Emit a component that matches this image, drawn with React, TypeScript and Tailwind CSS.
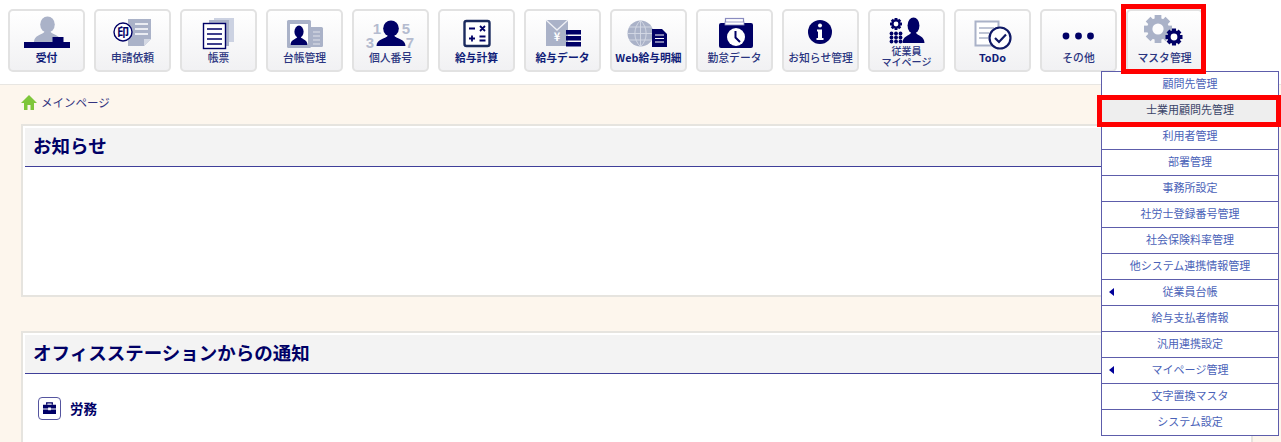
import React from "react";

const NAVY = "#000066";
const GREY = "#aab2c8";

function Gear({ cx, cy, r, fill, hole }: { cx: number; cy: number; r: number; fill: string; hole: string }) {
  const teeth = [0, 45, 90, 135, 180, 225, 270, 315];
  return (
    <g>
      {teeth.map((a) => (
        <rect key={a} x={cx - r * 0.24} y={cy - r} width={r * 0.48} height={r * 0.5} fill={fill} transform={`rotate(${a} ${cx} ${cy})`} />
      ))}
      <circle cx={cx} cy={cy} r={r * 0.78} fill={fill} />
      <circle cx={cx} cy={cy} r={r * 0.4} fill={hole} />
    </g>
  );
}

function Person({ cx, top, w, h, fill }: { cx: number; top: number; w: number; h: number; fill: string }) {
  const b = top + h;
  const hw = w * 0.27;
  return (
    <g fill={fill}>
      <ellipse cx={cx} cy={top + h * 0.3} rx={hw} ry={h * 0.32} />
      <path d={`M${cx - w / 2} ${b} C${cx - w / 2} ${b - h * 0.28} ${cx - w * 0.2} ${b - h * 0.28} ${cx - w * 0.1} ${b - h * 0.42} L${cx + w * 0.1} ${b - h * 0.42} C${cx + w * 0.2} ${b - h * 0.28} ${cx + w / 2} ${b - h * 0.28} ${cx + w / 2} ${b} Z`} />
    </g>
  );
}

const icons: Record<string, React.ReactNode> = {
  reception: (
    <>
      <Person cx={39.5} top={6} w={27} h={25} fill={GREY} />
      <rect x={44.5} y={26} width={11} height={6} fill={NAVY} />
      <rect x={16} y={31} width={46} height={6} fill={NAVY} />
    </>
  ),
  request: (
    <>
      <path d="M34 8H57V28L50 35H34Z" fill={GREY} />
      <path d="M41 13H54M41 18H54M41 23H54" stroke="#fff" strokeWidth={1.6} />
      <path d="M50 35V28H57Z" fill="#d5d9e4" />
      <circle cx={29} cy={21} r={9} fill="#fff" stroke={NAVY} strokeWidth={1.4} />
      <text x={29} y={25.5} textAnchor="middle" fontSize={12} fontWeight={700} fill={NAVY}>印</text>
    </>
  ),
  forms: (
    <>
      <rect x={34} y={7} width={20} height={24} fill="#ccd2e2" />
      <rect x={29} y={9} width={20} height={26} fill={GREY} />
      <rect x={23.5} y={12.5} width={22} height={25} fill="#fff" stroke={NAVY} strokeWidth={1.4} />
      <path d="M27 18H42M27 23H42M27 28H42M27 33H42" stroke={NAVY} strokeWidth={1.7} />
    </>
  ),
  ledger: (
    <>
      <rect x={40} y={16} width={17} height={20} rx={1.5} fill={GREY} />
      <path d="M47 21H54M47 25H54M47 29H54M47 33H54" stroke="#dfe2ea" strokeWidth={1.2} />
      <rect x={21} y={9} width={24} height={28} rx={1.5} fill={GREY} />
      <rect x={24} y={13} width={18} height={21} fill="#fff" />
      <Person cx={33} top={15} w={17} h={19} fill={NAVY} />
    </>
  ),
  mynumber: (
    <>
      <Person cx={39} top={10} w={29} h={25} fill={NAVY} />
      <g fontSize={15} fontWeight={700} fill="#b4bbcf" textAnchor="middle" fontFamily="'Liberation Sans', sans-serif">
        <text x={25} y={23}>1</text>
        <text x={54} y={23}>5</text>
        <text x={18} y={37}>3</text>
        <text x={58} y={37}>7</text>
      </g>
    </>
  ),
  calc: (
    <>
      <rect x={26.5} y={10} width={25} height={25} rx={2} fill="#fff" stroke="#1b2a5e" strokeWidth={2.4} />
      <path d="M31 17.5H37M42 15L47 20M47 15L42 20M31 27.5H37M34 24.5V30.5M41.5 25.5H47.5M41.5 29.5H47.5" stroke={NAVY} strokeWidth={1.8} fill="none" />
    </>
  ),
  paydata: (
    <>
      <rect x={22} y={9} width={22} height={26} fill={GREY} />
      <path d="M22 9L33 19L44 9" fill="none" stroke="#eef0f5" strokeWidth={1.3} />
      <text x={33} y={30} textAnchor="middle" fontSize={11} fontWeight={700} fill="#fff">¥</text>
      <rect x={42} y={19} width={15} height={4.5} fill={NAVY} />
      <rect x={42} y={25} width={15} height={4.5} fill={NAVY} />
      <rect x={42} y={31} width={15} height={4.5} fill={NAVY} />
    </>
  ),
  web: (
    <>
      <circle cx={30.5} cy={22.5} r={13} fill={GREY} />
      <path d="M17.5 22.5H43.5M19 16H42M19 29H42M30.5 9.5V35.5M30.5 9.5C23 16 23 29 30.5 35.5M30.5 9.5C38 16 38 29 30.5 35.5" stroke="#d6dae5" strokeWidth={0.9} fill="none" />
      <path d="M42 18H52L57 23V36H42Z" fill={NAVY} />
      <path d="M45 24H54M45 27.5H54M45 31H54" stroke="#fff" strokeWidth={1} />
    </>
  ),
  attendance: (
    <>
      <rect x={29.5} y={7.5} width={18} height={8} fill="#fff" stroke="#8a8cc0" strokeWidth={1.2} />
      <rect x={23} y={12} width={34} height={25} rx={2} fill={NAVY} />
      <rect x={29} y={11} width={19} height={3} fill="#fff" stroke="#8a8cc0" strokeWidth={0.8} />
      <circle cx={40} cy={26} r={9} fill="#fff" />
      <path d="M39.5 20V26.5L44 31" stroke={NAVY} strokeWidth={2} fill="none" />
    </>
  ),
  notice: (
    <>
      <circle cx={38} cy={21} r={12} fill={NAVY} />
      <circle cx={38} cy={14.5} r={2} fill="#fff" />
      <path d="M35 18.5H40V27H41.5V29H34.5V27H36V20.5H35Z" fill="#fff" />
    </>
  ),
  employee: (
    <>
      <Gear cx={28} cy={13} r={6} fill={NAVY} hole="#fff" />
      <g fill={NAVY}>
        {[23.5, 28, 32.5].map((x) =>
          [22.5, 26.5, 30.5].map((y) => <circle key={`${x}-${y}`} cx={x} cy={y} r={1.9} />)
        )}
      </g>
      <Person cx={45.5} top={7} w={22} h={25} fill={NAVY} />
    </>
  ),
  todo: (
    <>
      <rect x={21.5} y={10.5} width={23} height={24} fill="#fff" stroke={GREY} strokeWidth={2} />
      <path d="M25 17H40M25 22H35M25 27H34" stroke={GREY} strokeWidth={1.6} />
      <circle cx={46} cy={27} r={10.5} fill="#fff" stroke="#101a66" strokeWidth={2.2} />
      <path d="M41 27L45 31L52 23.5" fill="none" stroke="#101a66" strokeWidth={2.2} />
    </>
  ),
  other: (
    <g fill={NAVY}>
      <circle cx={26} cy={25} r={3.4} />
      <circle cx={38.5} cy={25} r={3.4} />
      <circle cx={50.5} cy={25} r={3.4} />
    </g>
  ),
  master: (
    <>
      <Gear cx={32} cy={18} r={14} fill={GREY} hole="#fcfcfd" />
      <Gear cx={48} cy={26} r={8.5} fill={NAVY} hole="#fff" />
    </>
  ),
};

type Btn = { icon: string; label: string[]; strong?: boolean };

const buttons: Btn[] = [
  { icon: "reception", label: ["受付"], strong: true },
  { icon: "request", label: ["申請依頼"] },
  { icon: "forms", label: ["帳票"] },
  { icon: "ledger", label: ["台帳管理"] },
  { icon: "mynumber", label: ["個人番号"] },
  { icon: "calc", label: ["給与計算"], strong: true },
  { icon: "paydata", label: ["給与データ"], strong: true },
  { icon: "web", label: ["Web給与明細"], strong: true },
  { icon: "attendance", label: ["勤怠データ"] },
  { icon: "notice", label: ["お知らせ管理"] },
  { icon: "employee", label: ["従業員", "マイページ"] },
  { icon: "todo", label: ["ToDo"], strong: true },
  { icon: "other", label: ["その他"] },
  { icon: "master", label: ["マスタ管理"] },
];

const menu: { label: string; arrow?: boolean; active?: boolean }[] = [
  { label: "顧問先管理" },
  { label: "士業用顧問先管理", active: true },
  { label: "利用者管理" },
  { label: "部署管理" },
  { label: "事務所設定" },
  { label: "社労士登録番号管理" },
  { label: "社会保険料率管理" },
  { label: "他システム連携情報管理" },
  { label: "従業員台帳", arrow: true },
  { label: "給与支払者情報" },
  { label: "汎用連携設定" },
  { label: "マイページ管理", arrow: true },
  { label: "文字置換マスタ" },
  { label: "システム設定" },
];

function ToolButton({ b }: { b: Btn }) {
  const two = b.label.length > 1;
  return (
    <div className="w-[77px] h-[63px] shrink-0 rounded-[5px] border-2 border-[#e2e2e2] bg-gradient-to-b from-white to-[#f1f1f3] flex flex-col items-center overflow-hidden">
      <svg viewBox="2 0 73 40" className="w-[73px] h-[40px] shrink-0">
        {icons[b.icon]}
      </svg>
      <div className={`${two ? "mt-[-6px] leading-[11px] text-[10px]" : "mt-[-1px] leading-[14px] text-[10.8px]"} ${b.strong ? "font-bold text-[#101c78]" : "font-medium text-[#2a3480]"} text-center whitespace-nowrap`}>
        {b.label.map((l) => (
          <div key={l}>{l}</div>
        ))}
      </div>
    </div>
  );
}

function CardTitle({ children }: { children: React.ReactNode }) {
  return (
    <div className="h-[39px] bg-[#f3f3f3] border-b border-[#3f3f99] pl-2 pb-[2px] flex items-center text-[18.5px] font-bold text-[#000066]">
      {children}
    </div>
  );
}

export default function App() {
  return (
    <div className="relative w-[1281px] h-[442px] overflow-hidden bg-white flex flex-col font-['Noto_Sans_CJK_JP',sans-serif]">
      <header className="h-[85px] shrink-0 bg-white border-b border-[#e8e6e2] pl-2 pt-[8.5px] flex gap-[9px]">
        {buttons.map((b) => (
          <ToolButton key={b.icon} b={b} />
        ))}
      </header>

      <main className="flex-1 bg-[#fdf6ed] pl-[21px] pr-[28px] overflow-hidden">
        <div className="h-[39px] flex items-center gap-[4px] text-[11.5px] text-[#33337f]">
          <svg viewBox="0 0 16 15" className="w-[16px] h-[15px] mb-[4px]">
            <path d="M8 0L16 8H13V15H9.5V10H6.5V15H3V8H0Z" fill="#7ec63a" />
          </svg>
          <span className="mb-[3px]">メインページ</span>
        </div>

        <section className="h-[173px] bg-white border-2 border-[#e6e4df] p-[2px]">
          <CardTitle>お知らせ</CardTitle>
        </section>

        <section className="mt-[34px] h-[200px] bg-white border-2 border-[#e6e4df] p-[2px]">
          <CardTitle>オフィスステーションからの通知</CardTitle>
          <div className="mt-[23px] ml-[13px] flex items-center gap-[9px]">
            <div className="w-[23px] h-[23px] rounded-[4px] border border-[#55559f] flex items-center justify-center">
              <svg viewBox="0 0 16 14" className="w-[15px] h-[13px]">
                <path d="M5 3V1H11V3" fill="none" stroke="#000066" strokeWidth={1.4} />
                <path d="M1 3H15V7H9.5V6H6.5V7H1ZM1 8H6.5V9H9.5V8H15V13H1Z" fill="#000066" />
              </svg>
            </div>
            <span className="text-[13.5px] font-bold text-[#000066] mb-[1px]">労務</span>
          </div>
        </section>
      </main>

      <nav className="absolute left-[1101px] top-[71px] w-[178px] border-x border-t border-[#5d5dab] bg-white">
        {menu.map((m) => (
          <div
            key={m.label}
            className={`relative h-[26px] border-b border-[#5d5dab] pb-[3px] flex items-center justify-center text-[11px] ${m.active ? "bg-[#eeeeee] text-[#3a4468]" : "text-[#4a62b8]"}`}
          >
            {m.arrow && (
              <span className="absolute left-[7px] top-[8px] w-0 h-0 border-y-[4px] border-y-transparent border-r-[5px] border-r-[#000099]" />
            )}
            {m.label}
          </div>
        ))}
      </nav>

      <div className="absolute left-[1121px] top-[4px] w-[85px] h-[70px] border-[5px] border-[#ff0000]" />
      <div className="absolute left-[1097px] top-[95px] w-[184px] h-[32px] border-[5px] border-[#ff0000]" />
    </div>
  );
}
